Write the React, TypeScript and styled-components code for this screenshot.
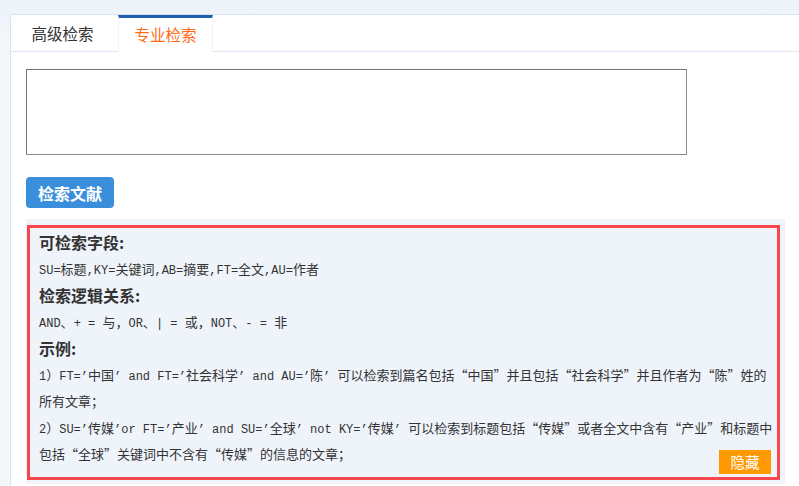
import styled, { createGlobalStyle } from "styled-components";

const GlobalStyle = createGlobalStyle`
  html, body {
    margin: 0;
    min-height: 486px;
    background: linear-gradient(#ecf2f9, #f3f7fc 40px);
    font-family: "Noto Sans CJK SC", sans-serif;
    color: #333;
  }
`;

const TABS = ["高级检索", "专业检索"];

// each entry is one visual line of the help box
const HELP_ROWS: { kind: "title" | "line"; text: string }[] = [
  { kind: "title", text: "可检索字段:" },
  { kind: "line", text: "SU=标题,KY=关键词,AB=摘要,FT=全文,AU=作者" },
  { kind: "title", text: "检索逻辑关系:" },
  { kind: "line", text: "AND、+ = 与，OR、| = 或，NOT、- = 非" },
  { kind: "title", text: "示例:" },
  { kind: "line", text: "1）FT=’中国’ and FT=’社会科学’ and AU=’陈’ 可以检索到篇名包括“中国”并且包括“社会科学”并且作者为“陈”姓的" },
  { kind: "line", text: "所有文章；" },
  { kind: "line", text: "2）SU=’传媒’or FT=’产业’ and SU=’全球’ not KY=’传媒’ 可以检索到标题包括“传媒”或者全文中含有“产业”和标题中" },
  { kind: "line", text: "包括“全球”关键词中不含有“传媒”的信息的文章；" },
];

const StyledPanel = styled.div`
  margin: 14px 0 0 10px;
  min-height: 472px;
  background: #fff;
  border-top: 1px solid #d6e3f3;
  border-left: 1px solid #d6e3f3;
`;

const StyledTabBar = styled.div`
  display: flex;
  height: 36px;
  padding-left: 4px;
  border-bottom: 1px solid #dce8f5;
`;

const StyledTab = styled.div<{ $active?: boolean }>`
  width: 95px;
  margin-right: 8px;
  box-sizing: border-box;
  height: ${(p) => (p.$active ? "37px" : "36px")};
  text-align: center;
  font-size: 15.5px;
  line-height: ${(p) => (p.$active ? "33px" : "36px")};
  color: ${(p) => (p.$active ? "#ff6a13" : "#333")};
  background: #fff;
  border-top: ${(p) => (p.$active ? "3px solid #1d5fae" : "none")};
  border-left: ${(p) => (p.$active ? "1px solid #eef3fa" : "none")};
  border-right: ${(p) => (p.$active ? "1px solid #eef3fa" : "none")};
`;

const StyledContent = styled.div`
  padding: 17px 0 0 15px;
`;

const StyledTextArea = styled.textarea`
  display: block;
  box-sizing: border-box;
  width: 661px;
  height: 86px;
  margin: 0;
  resize: none;
  border: 1px solid #8c8c8c;
  border-top-color: #6f6f6f;
  border-left-color: #7a7a7a;
  outline: none;
  background: #fff;
`;

const StyledSearchButton = styled.button`
  display: block;
  margin-top: 22px;
  width: 88px;
  height: 31px;
  padding: 0;
  border: none;
  border-radius: 4px;
  background: #3a8fdc;
  color: #fff;
  font-family: "Noto Sans CJK SC", sans-serif;
  font-size: 16px;
  font-weight: 700;
`;

const StyledHelpWrap = styled.div`
  margin-top: 11px;
  width: 759px;
  box-sizing: border-box;
  padding: 6px 5px 4px 1px;
  background: #eff4fb;
`;

const StyledHelpBox = styled.div`
  position: relative;
  border: 3px solid #f7474c;
  padding: 2px 6px 9px 9px;
  background: #eff4fb;
`;

const StyledHelpTitle = styled.div`
  width: fit-content;
  margin: -1px 0 1px;
  font-size: 16px;
  font-weight: 700;
  line-height: 26.4px;
  color: #333;
`;

const StyledHelpLine = styled.div`
  width: fit-content;
  white-space: nowrap;
  font-family: "Noto Sans CJK SC", sans-serif;
  font-size: 13px;
  line-height: 26.4px;
  color: #333;
`;

const StyledLatin = styled.span`
  font-family: "Liberation Mono", monospace;
  font-size: 12px;
  line-height: 1;
`;

const StyledHideButton = styled.button`
  position: absolute;
  right: 6px;
  bottom: 3px;
  width: 52px;
  height: 24px;
  padding: 0;
  border: none;
  background: #ff9900;
  color: #fff;
  font-family: "Noto Sans CJK SC", sans-serif;
  font-size: 14.5px;
`;

// ascii runs (and single quotes) get the monospace face, the rest stays on the CJK face
const LATIN_RUN = /([\x20-\x7e’]+)/;
const renderMixed = (text: string) =>
  text.split(LATIN_RUN).map((part, i) =>
    i % 2 === 1 ? <StyledLatin key={i}>{part}</StyledLatin> : part
  );

export default function App() {
  return (
    <>
      <GlobalStyle />
      <StyledPanel>
        <StyledTabBar>
          {TABS.map((t, i) => (
            <StyledTab key={t} $active={i === 1}>
              {t}
            </StyledTab>
          ))}
        </StyledTabBar>

        <StyledContent>
          <StyledTextArea />
          <StyledSearchButton>检索文献</StyledSearchButton>

          <StyledHelpWrap>
            <StyledHelpBox>
              {HELP_ROWS.map((row, i) =>
                row.kind === "title" ? (
                  <StyledHelpTitle key={i}>{row.text}</StyledHelpTitle>
                ) : (
                  <StyledHelpLine key={i}>{renderMixed(row.text)}</StyledHelpLine>
                )
              )}
              <StyledHideButton>隐藏</StyledHideButton>
            </StyledHelpBox>
          </StyledHelpWrap>
        </StyledContent>
      </StyledPanel>
    </>
  );
}
